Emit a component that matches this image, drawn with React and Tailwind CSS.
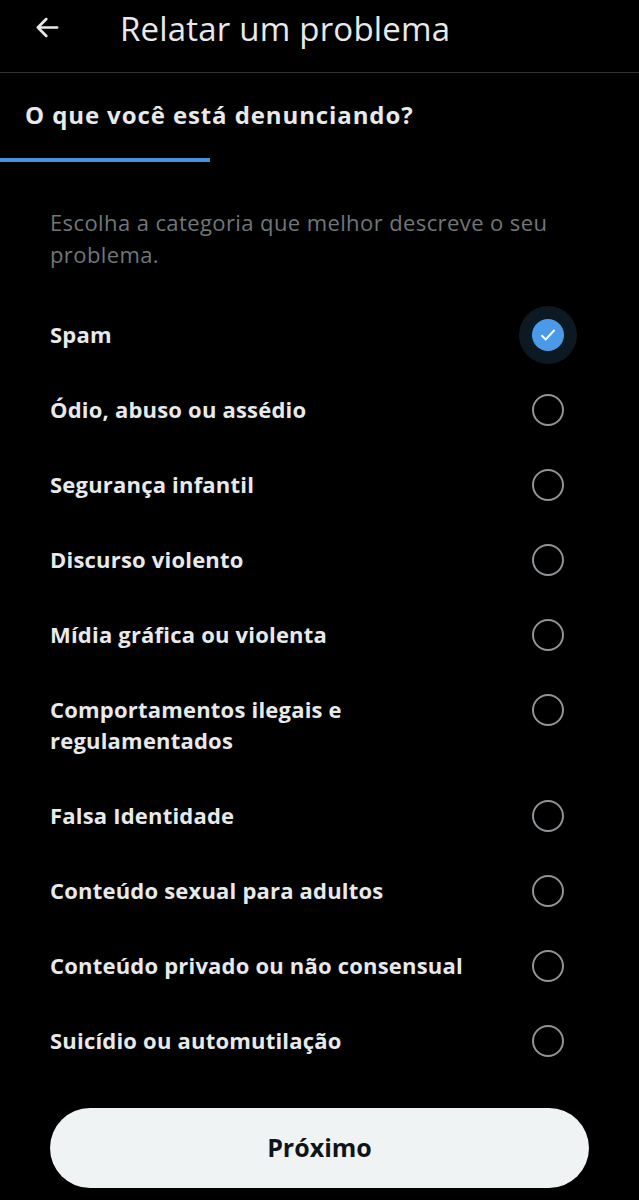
import { useState } from "react";

const OPTIONS = [
  "Spam",
  "Ódio, abuso ou assédio",
  "Segurança infantil",
  "Discurso violento",
  "Mídia gráfica ou violenta",
  "Comportamentos ilegais e regulamentados",
  "Falsa Identidade",
  "Conteúdo sexual para adultos",
  "Conteúdo privado ou não consensual",
  "Suicídio ou automutilação",
];

function Radio({ checked }) {
  if (checked) {
    return (
      <div className="w-[58px] h-[58px] rounded-full bg-[#0d1922] flex items-center justify-center shrink-0">
        <div className="w-[32px] h-[32px] rounded-full bg-[#4a9ae9] flex items-center justify-center">
          <svg width="18" height="18" viewBox="0 0 24 24" fill="none" stroke="#fff" strokeWidth="2.6" strokeLinecap="round" strokeLinejoin="round">
            <path d="M4 13l5 5L20 6" />
          </svg>
        </div>
      </div>
    );
  }
  return (
    <div className="w-[58px] h-[58px] flex items-center justify-center shrink-0">
      <div className="w-[32px] h-[32px] rounded-full border-[2.5px] border-[#8f9498]" />
    </div>
  );
}

export default function App() {
  const [selected, setSelected] = useState(0);

  return (
    <div className="w-[639px] h-[1200px] bg-black text-[#e7e9ea] flex flex-col overflow-hidden" style={{ fontFamily: "'Open Sans', 'Noto Sans', sans-serif" }}>
      {/* header */}
      <div className="h-[73px] flex items-center border-b border-[#2f3336] shrink-0">
        <div className="w-[120px] pl-[33px] flex items-center pb-[18px]">
          <svg width="29" height="29" viewBox="0 0 24 24" fill="none" stroke="#e7e9ea" strokeWidth="2.2" strokeLinecap="round" strokeLinejoin="round">
            <path d="M20 12H4M11 5l-7 7 7 7" />
          </svg>
        </div>
        <h1 className="text-[33px] tracking-[0.2px] leading-none pb-[16px]">Relatar um problema</h1>
      </div>

      {/* step */}
      <div className="shrink-0">
        <h2 className="px-[25px] pt-[26px] pb-[27px] text-[24px] font-bold tracking-[0.9px] leading-[32px]">O que você está denunciando?</h2>
        <div className="w-[210px] h-[4px] bg-[#4a90dc]" />
      </div>

      <p className="pl-[50px] pr-[70px] pt-[44px] text-[22px] tracking-[0.4px] leading-[32px] text-[#71767b]">
        Escolha a categoria que melhor descreve o seu problema.
      </p>

      <div className="flex flex-col pt-[29px]">
        {OPTIONS.map((label, i) => (
          <button
            key={label}
            onClick={() => setSelected(i)}
            className="flex items-start justify-between pl-[50px] pr-[62px] py-[7px] text-left"
          >
            <span className="text-[22px] font-bold tracking-[0.2px] leading-[31px] pt-[13px] pb-[17px] max-w-[430px]">{label}</span>
            <Radio checked={selected === i} />
          </button>
        ))}
      </div>

      <div className="px-[50px] mt-auto pb-[12px]">
        <button className="w-full h-[80px] rounded-full bg-[#eff3f4] text-[#0f1419] text-[25px] font-bold">
          Próximo
        </button>
      </div>
    </div>
  );
}
